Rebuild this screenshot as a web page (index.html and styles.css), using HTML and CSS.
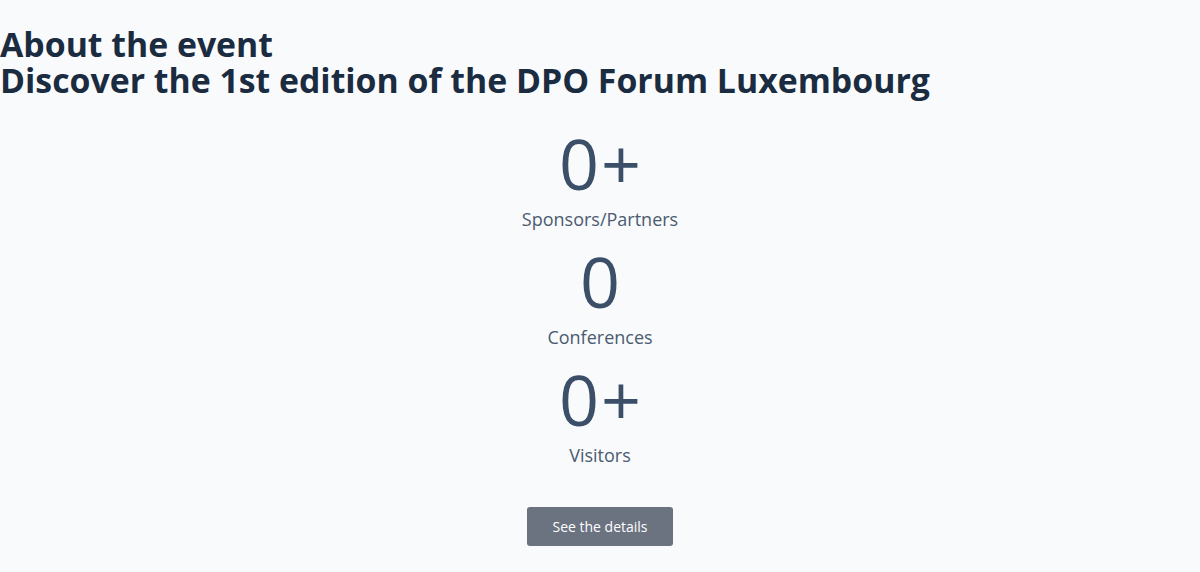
FILE: index.html
```html
<!DOCTYPE html>
<html lang="en">
<head>
  <meta charset="UTF-8" />
  <meta name="viewport" content="width=device-width, initial-scale=1.0" />
  <title>About the event - DPO Forum Luxembourg</title>
  <link rel="stylesheet" href="styles.css">
</head>
<body>
<section class="about">
  <h2 class="about-title">
    <span>About the event</span>
    <span>Discover the 1st edition of the DPO Forum Luxembourg</span>
  </h2>

  <div class="stats">
    <div class="stat">
      <div class="stat-value">0<span class="plus">+</span></div>
      <div class="stat-label">Sponsors/Partners</div>
    </div>
    <div class="stat">
      <div class="stat-value">0</div>
      <div class="stat-label">Conferences</div>
    </div>
    <div class="stat">
      <div class="stat-value">0<span class="plus">+</span></div>
      <div class="stat-label">Visitors</div>
    </div>
  </div>

  <div class="actions">
    <a class="btn-details" href="#">See the details</a>
  </div>
</section>
</body>
</html>
```

FILE: styles.css
```css
* { margin: 0; padding: 0; box-sizing: border-box; }
body {
  font-family: 'Open Sans', 'Noto Sans', sans-serif;
  background: #f8fafc;
  color: #1e293b;
  min-height: 100vh;
}
.about {
  padding-top: 26px;
}
.about-title {
  font-weight: 700;
  font-size: 33.8px;
  line-height: 36px;
  color: #1b2b40;
}
.about-title span { display: block; }

.stats {
  display: flex;
  flex-direction: column;
  align-items: center;
  margin-top: 25px;
  gap: 9px;
}
.stat {
  display: flex;
  flex-direction: column;
  align-items: center;
}
.stat-value {
  font-size: 70px;
  line-height: 80px;
  color: #3b4f68;
  font-weight: 500;
}
.stat-value .plus { margin-left: 2px; }
.stat-label {
  margin-top: 3px;
  font-size: 18px;
  line-height: 26px;
  color: #4b5b70;
}

.actions {
  display: flex;
  justify-content: center;
  margin-top: 39px;
}
.btn-details {
  display: inline-block;
  width: 146px;
  padding: 10px 0;
  text-align: center;
  background: #6b7280;
  color: #fff;
  font-size: 14px;
  line-height: 19px;
  text-decoration: none;
  border-radius: 3px;
}
```
